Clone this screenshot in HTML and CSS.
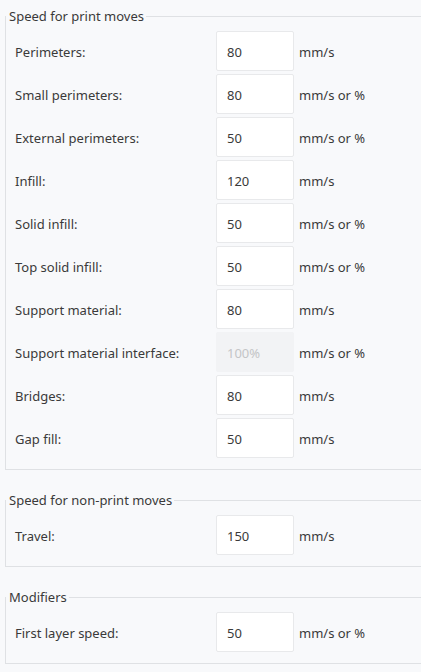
FILE: index.html
```html
<!DOCTYPE html>
<html>
<head>
<meta charset="utf-8">
<link rel="stylesheet" href="styles.css">
</head>
<body>
<div class="page">
  <fieldset class="group">
    <legend class="group-title">Speed for print moves</legend>
    <div class="rows">
      <div class="row"><span class="label">Perimeters:</span><span class="field">80</span><span class="unit">mm/s</span></div>
      <div class="row"><span class="label">Small perimeters:</span><span class="field">80</span><span class="unit">mm/s or %</span></div>
      <div class="row"><span class="label">External perimeters:</span><span class="field">50</span><span class="unit">mm/s or %</span></div>
      <div class="row"><span class="label">Infill:</span><span class="field">120</span><span class="unit">mm/s</span></div>
      <div class="row"><span class="label">Solid infill:</span><span class="field">50</span><span class="unit">mm/s or %</span></div>
      <div class="row"><span class="label">Top solid infill:</span><span class="field">50</span><span class="unit">mm/s or %</span></div>
      <div class="row"><span class="label">Support material:</span><span class="field">80</span><span class="unit">mm/s</span></div>
      <div class="row"><span class="label">Support material interface:</span><span class="field disabled">100%</span><span class="unit">mm/s or %</span></div>
      <div class="row"><span class="label">Bridges:</span><span class="field">80</span><span class="unit">mm/s</span></div>
      <div class="row"><span class="label">Gap fill:</span><span class="field">50</span><span class="unit">mm/s</span></div>
    </div>
  </fieldset>
  <fieldset class="group">
    <legend class="group-title">Speed for non-print moves</legend>
    <div class="rows">
      <div class="row"><span class="label">Travel:</span><span class="field">150</span><span class="unit">mm/s</span></div>
    </div>
  </fieldset>
  <fieldset class="group">
    <legend class="group-title">Modifiers</legend>
    <div class="rows">
      <div class="row"><span class="label">First layer speed:</span><span class="field">50</span><span class="unit">mm/s or %</span></div>
    </div>
  </fieldset>
</div>
</body>
</html>
```
FILE: styles.css
```css
html, body {
  margin: 0;
  padding: 0;
  background: #f8f9fb;
}
body {
  font-family: "Noto Sans", "Open Sans", sans-serif;
  font-size: 13px;
  color: #3a3a3a;
}
.page {
  box-sizing: border-box;
  padding: 8px 0 0 5px;
  width: 421px;
  height: 672px;
  overflow: hidden;
}
.group {
  margin: 0 -12px 22px 0;
  padding: 6px 0 11px 9px;
  border: 1px solid #dfe1e4;
  min-width: 0;
}
.group-title {
  padding: 0 2px 0 3px;
  margin-left: -9px;
  line-height: 17px;
  color: #3a3a3a;
}
.rows {
  display: flex;
  flex-direction: column;
  gap: 3px;
}
.row {
  display: flex;
  align-items: center;
  height: 40px;
}
.label {
  width: 201px;
  padding-top: 1px;
}
.field {
  box-sizing: border-box;
  width: 78px;
  height: 40px;
  padding: 1px 10px 0;
  background: #ffffff;
  border: 1px solid #e8e9eb;
  border-radius: 2px;
  display: flex;
  align-items: center;
  color: #3a3a3a;
}
.field.disabled {
  background: #f2f3f5;
  border-color: #f2f3f5;
  color: #c4c5c7;
}
.unit {
  margin-left: 5px;
  padding-top: 1px;
}
```
